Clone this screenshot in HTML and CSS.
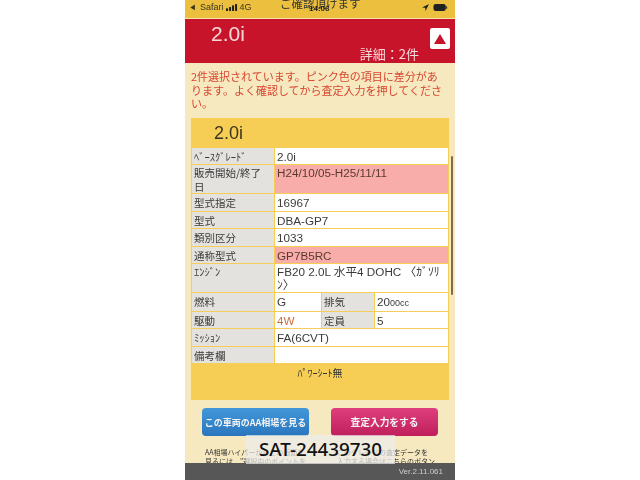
FILE: index.html
```html
<!DOCTYPE html>
<html lang="ja">
<head>
<meta charset="utf-8">
<title>2.0i</title>
<link rel="stylesheet" href="styles.css">
</head>
<body>
<main class="phone">
  <div class="screen">
    <header class="status">
      <span class="status-left"><span class="back">◀</span> Safari
        <svg class="signal" viewBox="0 0 14 8" width="12" height="7"><rect x="0" y="5" width="2.4" height="3"/><rect x="3.5" y="3.5" width="2.4" height="4.5"/><rect x="7" y="1.5" width="2.4" height="6.5"/><rect x="10.5" y="0" width="2.4" height="8"/></svg>
        4G</span>
      <span class="status-title">ご確認頂けます</span>
      <span class="status-time">14:06</span>
      <span class="status-right">
        <svg class="arrow" viewBox="0 0 10 10" width="7" height="7"><path d="M10 0 L0 5 L4.6 5.4 L5 10 Z"/></svg>
        <svg class="battery" viewBox="0 0 16 8" width="15" height="7"><rect x="0" y="0" width="14" height="8" rx="2.5"/><rect x="14.4" y="2.5" width="1.2" height="3" rx=".5"/></svg>
      </span>
    </header>
    <section class="banner">
      <div class="banner-title">2.0i</div>
      <div class="banner-side">
        <span class="banner-count">詳細：2件</span>
        <span class="toggle"><svg viewBox="0 0 12 10" width="12" height="10"><path d="M6 0 L12 10 L0 10 Z"/></svg></span>
      </div>
    </section>
    <p class="notice">2件選択されています。ピンク色の項目に差分があります。よく確認してから査定入力を押してください。</p>
    <section class="card">
      <h2 class="card-title">2.0i</h2>
      <table class="spec">
        <colgroup><col class="c1"><col class="c2"><col class="c3"><col class="c4"></colgroup>
        <tr><th class="small">ﾍﾞｰｽｸﾞﾚｰﾄﾞ</th><td colspan="3">2.0i</td></tr>
        <tr class="tall"><th>販売開始/終了日</th><td colspan="3" class="diff">H24/10/05-H25/11/11</td></tr>
        <tr><th>型式指定</th><td colspan="3">16967</td></tr>
        <tr><th>型式</th><td colspan="3">DBA-GP7</td></tr>
        <tr><th>類別区分</th><td colspan="3">1033</td></tr>
        <tr><th>通称型式</th><td colspan="3" class="diff">GP7B5RC</td></tr>
        <tr class="tall"><th class="small">ｴﾝｼﾞﾝ</th><td colspan="3" class="engine">FB20 2.0L 水平4 DOHC 〈ｶﾞｿﾘﾝ〉</td></tr>
        <tr><th>燃料</th><td>G</td><th>排気</th><td>20<span class="unit">00cc</span></td></tr>
        <tr><th>駆動</th><td class="accent">4W</td><th>定員</th><td>5</td></tr>
        <tr><th class="small">ﾐｯｼｮﾝ</th><td colspan="3">FA(6CVT)</td></tr>
        <tr><th>備考欄</th><td colspan="3"></td></tr>
      </table>
      <div class="remarks">ﾊﾟﾜｰｼｰﾄ無</div>
    </section>
    <div class="actions">
      <div class="action">
        <a class="btn blue">この車両のAA相場を見る</a>
        <p class="hint">AA相場ハイパーからこの画面を<br>見るには、"選択中のポイントを</p>
      </div>
      <div class="action">
        <a class="btn pink">査定入力をする</a>
        <p class="hint second">このグレードの査定データを<br>入力する場合はこちらのボタン</p>
      </div>
    </div>
    <footer class="version">Ver.2.11.061</footer>
    <span class="scrollbar"></span>
  </div>
  <div class="stamp">SAT-24439730</div>
</main>
</body>
</html>
```
FILE: styles.css
```css
* { box-sizing: border-box; }
html, body { margin: 0; height: 100%; background: #fff; }
body { display: flex; justify-content: center; font-family: "Noto Sans CJK JP", "Liberation Sans", sans-serif; overflow: hidden; }
.phone { position: relative; width: 270px; height: 480px; overflow: hidden; }
.screen { position: relative; height: 480px; display: flex; flex-direction: column; background: #f6e8bf; overflow: hidden; filter: blur(0.35px); }

.status { position: relative; flex: none; height: 19px; background: #ecc03e; border-bottom: 1px solid #f6e3a8; display: flex; justify-content: space-between; align-items: flex-start; padding: 2px 7px 0 4px; font-family: "Liberation Sans", sans-serif; font-size: 9px; color: #3a3520; }
.status-left { display: flex; align-items: center; gap: 2px; line-height: 11px; white-space: nowrap; }
.back { font-size: 7px; margin-right: 2px; }
.signal { fill: #222; }
.status-title { position: absolute; left: 95px; top: -5px; font-family: "Noto Sans CJK JP", sans-serif; font-size: 11.5px; line-height: 16px; color: #333; white-space: nowrap; }
.status-time { position: absolute; left: 124px; top: 3px; font-weight: bold; font-size: 8px; line-height: 11px; color: #222; }
.status-right { display: flex; align-items: center; gap: 4px; padding-top: 2px; }
.arrow, .battery { fill: #222; }

.banner { flex: none; height: 44px; background: #c8142b; display: flex; justify-content: space-between; color: #f5d9d9; }
.banner-title { padding: 2px 0 0 26px; font-family: "Liberation Sans", sans-serif; font-size: 21px; line-height: 26px; }
.banner-side { display: flex; align-items: flex-start; gap: 11px; padding: 9px 5px 0 0; }
.toggle { width: 20px; height: 21px; background: #fff; border-radius: 2px; display: flex; align-items: center; justify-content: center; }
.toggle svg { fill: #c8142b; }
.banner-count { margin-top: 18px; font-size: 13px; line-height: 16px; white-space: nowrap; }

.notice { flex: none; margin: 0; padding: 7px 10px 0 6px; height: 55px; font-size: 11px; line-height: 13.5px; color: #d8452f; }

.card { flex: none; margin: 0 6px; height: 282px; background: #f6cd55; display: flex; flex-direction: column; }
.card-title { margin: 0; height: 29px; padding: 3px 0 0 23px; font-family: "Liberation Sans", sans-serif; font-weight: normal; font-size: 18px; line-height: 24px; color: #3a3520; }
.spec { width: 258px; table-layout: fixed; border-collapse: separate; border-spacing: 1px; margin: 0; font-size: 10.5px; }
.c1 { width: 82px; } .c2 { width: 46px; } .c3 { width: 52px; } .c4 { width: 73px; }
.spec th, .spec td { height: 16.4px; padding: 1px 2px 0; font-weight: normal; text-align: left; vertical-align: top; line-height: 15px; color: #3a3a3a; overflow: hidden; }
.spec th { background: #e4e2de; padding-right: 4px; }
.spec td { background: #fff; font-family: "Liberation Sans", "Noto Sans CJK JP", sans-serif; font-size: 11.7px; }
.spec .small { font-size: 10.5px; }
.spec .tall th, .spec .tall td { height: 28px; line-height: 13.5px; }
.spec td.engine { word-break: break-all; }
.spec td.diff { background: #f8adaa; color: #5a3a30; }
.spec td.accent { color: #c8703f; }
.unit { font-size: 9px; }
.remarks { padding-top: 1px; text-align: center; font-size: 10px; line-height: 16px; color: #333; }

.actions { flex: none; display: flex; gap: 22px; padding: 8px 17px 0; height: 63px; overflow: hidden; }
.action { width: 107px; flex: none; }
.btn { display: flex; align-items: center; justify-content: center; height: 28px; border-radius: 4px; color: #f4f4f4; font-weight: bold; white-space: nowrap; }
.blue { font-size: 9px; background: linear-gradient(#4397d9, #2a76bd); }
.pink { font-size: 9.7px; background: linear-gradient(#df3e7c, #bf205c); }
.hint { margin: 12px 0 0 3px; font-size: 7px; line-height: 9px; color: #333; white-space: nowrap; }
.second { margin-left: 6px; }

.version { flex: none; height: 17px; background: #575757; color: #cfcfcf; font-family: "Liberation Sans", sans-serif; font-size: 8px; line-height: 17px; text-align: right; padding-right: 12px; }
.scrollbar { position: absolute; left: 265.5px; top: 156px; width: 2.5px; height: 139px; background: #5e4e34; border-radius: 2px; opacity: .8; }

.stamp { position: absolute; left: 61px; top: 435px; width: 149px; height: 29px; background: rgba(235,235,235,.72); text-align: center; font-family: "Noto Sans", sans-serif; font-weight: 500; font-size: 18.8px; line-height: 28px; color: #111; white-space: nowrap; }
```
